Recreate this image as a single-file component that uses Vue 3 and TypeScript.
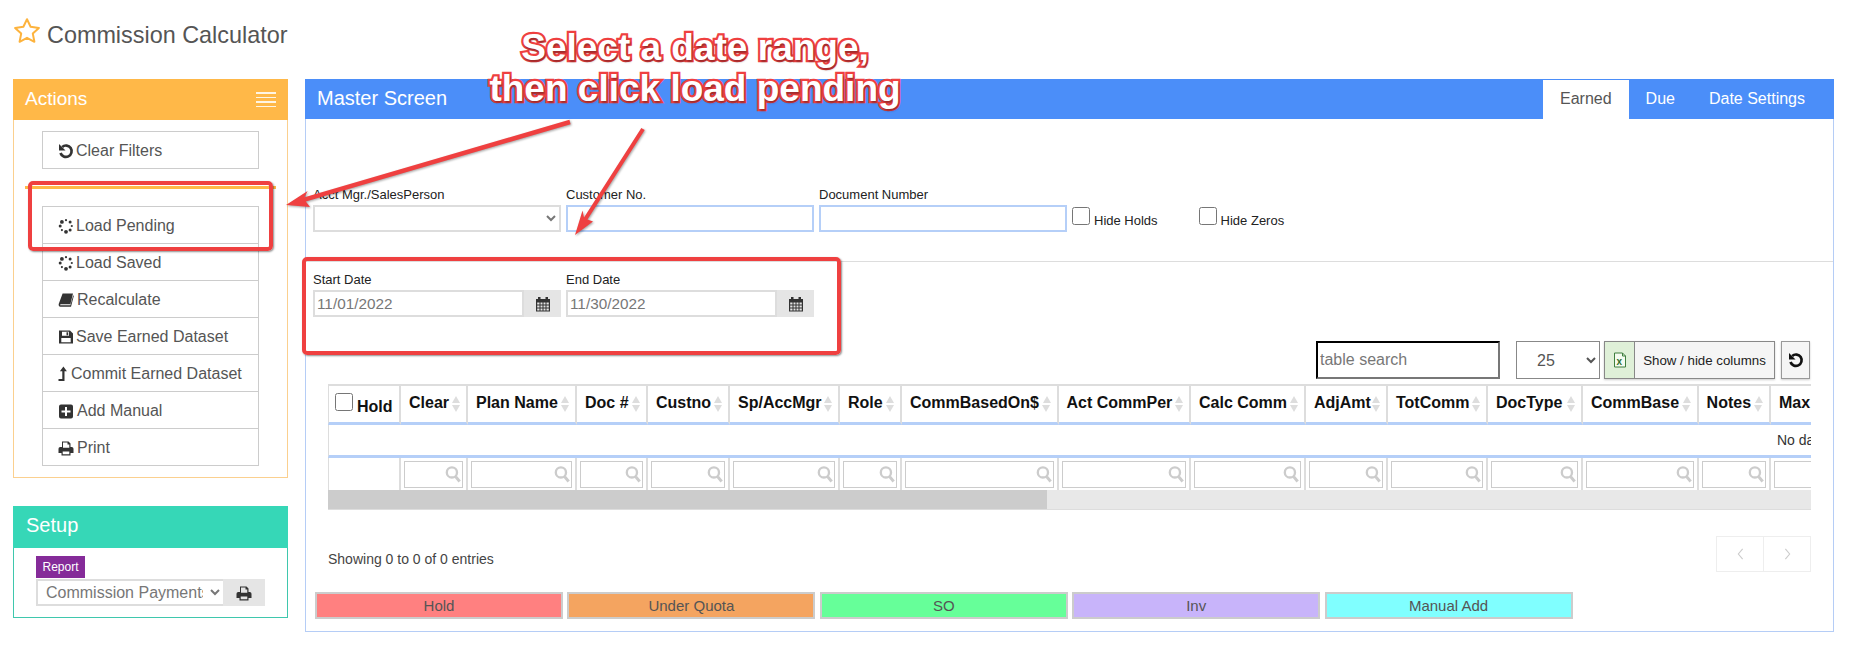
<script setup lang="ts">
interface Action { label: string; icon: string }
const actions: Action[] = [
  { label: 'Load Pending', icon: 'spin' },
  { label: 'Load Saved', icon: 'spin' },
  { label: 'Recalculate', icon: 'book' },
  { label: 'Save Earned Dataset', icon: 'save' },
  { label: 'Commit Earned Dataset', icon: 'up' },
  { label: 'Add Manual', icon: 'plus' },
  { label: 'Print', icon: 'print' },
]
const columns: { t: string; w: number }[] = [
  { t: 'Hold', w: 73 }, { t: 'Clear', w: 67 }, { t: 'Plan Name', w: 109 }, { t: 'Doc #', w: 71 },
  { t: 'Custno', w: 82 }, { t: 'Sp/AccMgr', w: 110 }, { t: 'Role', w: 62 }, { t: 'CommBasedOn$', w: 156.5 },
  { t: 'Act CommPer', w: 132.5 }, { t: 'Calc Comm', w: 115 }, { t: 'AdjAmt', w: 82 }, { t: 'TotComm', w: 100 },
  { t: 'DocType', w: 95 }, { t: 'CommBase', w: 115.6 }, { t: 'Notes', w: 72.4 }, { t: 'Max', w: 80 },
]
const legend = [
  { t: 'Hold', c: '#ff8080' }, { t: 'Under Quota', c: '#f4a460' }, { t: 'SO', c: '#66ff99' },
  { t: 'Inv', c: '#c8b4fa' }, { t: 'Manual Add', c: '#80ffff' },
]
const dots = [0, 1, 2, 3, 4, 5, 6, 7].map((i) => ({
  x: 8 + 5.8 * Math.cos((i * Math.PI) / 4),
  y: 8 + 5.8 * Math.sin((i * Math.PI) / 4),
  r: 1.1 + (i % 3) * 0.4,
}))
</script>

<template>
  <div class="page">
    <header class="head">
      <svg class="star" viewBox="0 0 28 27" aria-hidden="true">
        <path d="M14 2.2l3.6 7.6 8.3 1.1-6.1 5.7 1.6 8.2L14 20.8l-7.4 4 1.6-8.2-6.1-5.7 8.3-1.1z" fill="none" stroke="#fdb33d" stroke-width="2" stroke-linejoin="round" />
      </svg>
      <h1>Commission Calculator</h1>
    </header>

    <div class="layout">
      <aside class="side">
        <section class="panel actions">
          <div class="phead">
            <span class="ptitle">Actions</span>
            <span class="burger"><i></i><i></i><i></i><i></i></span>
          </div>
          <div class="actions-body">
            <button class="btn single">
              <svg class="ico" viewBox="0 0 16 16"><path d="M4.2 3.9A5.7 5.7 0 1 1 2.5 10" fill="none" stroke="currentColor" stroke-width="2.7" /><path d="M1 1v6.500h6.500z" fill="currentColor" /></svg>
              Clear Filters
            </button>
            <div class="rule"></div>
            <div class="stack">
              <button v-for="a in actions" :key="a.label" class="btn">
                <svg v-if="a.icon === 'up'" class="ico up" viewBox="1 0 10 16">
                  <path d="M1.500 15v-2h3.800V5.200H2.900L6.400.6l3.500 4.600H7.500V15z" fill="currentColor" />
                </svg>
                <svg v-else class="ico" :class="a.icon" viewBox="0 0 16 16">
                  <template v-if="a.icon === 'spin'">
                    <circle v-for="(d, i) in dots" :key="i" :cx="d.x" :cy="d.y" :r="d.r" fill="currentColor" />
                  </template>
                  <path v-else-if="a.icon === 'book'" d="M4.6 1.6H15l-2.6 10.6H3.2c-1 0-1.2.7-1 1.1h10.2l2.8-10 .6.8-2.8 10.6H2.4C.9 14.700.3 13.300.8 11.800z" fill="currentColor" />
                  <path v-else-if="a.icon === 'save'" fill-rule="evenodd" d="M1 1.500h11l3 3v10H1zM4 2.700v4h7v-4zM3.300 9v4.300h9.400V9zM8.500 3.200h1.700v3H8.500z" fill="currentColor" />
                  <path v-else-if="a.icon === 'plus'" fill-rule="evenodd" d="M3 1.500h10a2 2 0 0 1 2 2v10a2 2 0 0 1-2 2H3a2 2 0 0 1-2-2v-10a2 2 0 0 1 2-2zM7 4v3.500H3.500v2H7V13h2V9.500h3.500v-2H9V4z" fill="currentColor" />
                  <path v-else fill-rule="evenodd" d="M4 1.500h6.500l2 2V7h1.200A1.800 1.800 0 0 1 15.500 8.800V13h-3v2.500h-9V13h-3V8.800A1.800 1.800 0 0 1 2.300 7H4zM5 2.600V7.800h6.300V4.400H9.500V2.600zM4.700 11.500v2.800h6.600v-2.800z" fill="currentColor" />
                </svg>
                {{ a.label }}
              </button>
            </div>
          </div>
        </section>

        <section class="panel setup">
          <div class="phead"><span class="ptitle setup-t">Setup</span></div>
          <div class="setup-body">
            <span class="tag">Report</span>
            <div class="setup-row">
              <select class="setup-sel"><option>Commission Payments</option></select>
              <span class="addon print-addon">
                <svg class="ico" viewBox="0 0 16 16"><path fill-rule="evenodd" d="M4 1.500h6.500l2 2V7h1.200A1.800 1.800 0 0 1 15.500 8.800V13h-3v2.500h-9V13h-3V8.800A1.800 1.800 0 0 1 2.300 7H4zM5 2.600V7.800h6.300V4.400H9.500V2.600zM4.700 11.500v2.800h6.600v-2.800z" fill="#333" /></svg>
              </span>
            </div>
          </div>
        </section>
      </aside>

      <main class="master">
        <div class="mhead">
          <span class="mtitle">Master Screen</span>
          <nav class="tabs">
            <a class="tab active">Earned</a>
            <a class="tab">Due</a>
            <a class="tab">Date Settings</a>
          </nav>
        </div>

        <div class="filters">
          <label class="field">
            <span>Acct Mgr./SalesPerson</span>
            <select class="ctl"><option></option></select>
          </label>
          <label class="field">
            <span>Customer No.</span>
            <input class="ctl blue" />
          </label>
          <label class="field">
            <span>Document Number</span>
            <input class="ctl blue" />
          </label>
          <label class="chk first"><input type="checkbox" /><span>Hide Holds</span></label>
          <label class="chk"><input type="checkbox" /><span>Hide Zeros</span></label>
        </div>

        <div class="dates">
          <label class="field" v-for="d in [['Start Date', '11/01/2022'], ['End Date', '11/30/2022']]" :key="d[0]">
            <span>{{ d[0] }}</span>
            <span class="date-row">
              <input class="ctl date" :value="d[1]" />
              <span class="addon cal">
                <svg class="ico" viewBox="0 0 16 16"><path fill-rule="evenodd" d="M1 3h2V1h2.500v2h5V1H13v2h2v12.500H1zM2.200 6.500v2h2.300v-2zm3.300 0v2h2v-2zm3 0v2h2v-2zm3 0v2h2.300v-2zM2.200 9.500v2h2.300v-2zm3.300 0v2h2v-2zm3 0v2h2v-2zm3 0v2h2.300v-2zM2.200 12.500v2h2.300v-2zm3.300 0v2h2v-2zm3 0v2h2v-2zm3 0v2h2.300v-2z" fill="#333" /></svg>
              </span>
            </span>
          </label>
        </div>

        <div class="toolbar">
          <input class="tsearch" placeholder="table search" />
          <select class="tlen"><option>25</option></select>
          <div class="tgroup">
            <button class="excel">
              <svg viewBox="0 0 14 16" width="14" height="16"><path d="M1.500 1h8l3 3v11h-11z" fill="#f4fbf0" stroke="#3f7f3f" /><path d="M9.500 1v3h3" fill="none" stroke="#3f7f3f" /><text x="3.400" y="12.500" class="xl">x</text></svg>
            </button>
            <button class="showhide">Show / hide columns</button>
          </div>
          <button class="refresh">
            <svg class="ico" viewBox="0 0 16 16"><path d="M4.200 3.900A5.700 5.700 0 1 1 2.500 10" fill="none" stroke="#111" stroke-width="2.700" /><path d="M1 1v6.500h6.500z" fill="#111" /></svg>
          </button>
        </div>

        <div class="tablewrap">
          <table>
            <colgroup>
              <col v-for="c in columns" :key="c.t" :style="{ width: c.w + 'px' }" />
              <col />
            </colgroup>
            <thead>
              <tr>
                <th v-for="(c, i) in columns" :key="c.t" :class="{ hold: i === 0 }">
                  <input v-if="i === 0" type="checkbox" class="hold-chk" />
                  <span>{{ c.t }}</span>
                  <span v-if="i > 0" class="sort"></span>
                </th>
                <th></th>
              </tr>
            </thead>
            <tbody>
              <tr class="nodata"><td :colspan="columns.length + 1">No data available in table</td></tr>
              <tr class="frow">
                <td v-for="(c, i) in columns" :key="c.t">
                  <span v-if="i > 0" class="fbox">
                    <input />
                    <svg viewBox="0 0 16 16" class="mag"><circle cx="6.500" cy="6.500" r="4.800" fill="none" stroke="#ccc" stroke-width="2.200" /><path d="M10 10.500l3.800 4.500" stroke="#ccc" stroke-width="2.800" /></svg>
                  </span>
                </td>
                <td></td>
              </tr>
            </tbody>
          </table>
        </div>
        <div class="hscroll"><div class="thumb"></div></div>

        <div class="foot">
          <span class="info">Showing 0 to 0 of 0 entries</span>
          <div class="pager">
            <a><svg viewBox="0 0 8 14" width="7" height="12"><path d="M6.500 1L1.500 7l5 6" fill="none" stroke="#ccc" stroke-width="1.300" /></svg></a>
            <a><svg viewBox="0 0 8 14" width="7" height="12"><path d="M1.500 1l5 6-5 6" fill="none" stroke="#ccc" stroke-width="1.300" /></svg></a>
          </div>
        </div>

        <div class="legend">
          <div v-for="l in legend" :key="l.t" class="chip" :style="{ background: l.c }">{{ l.t }}</div>
        </div>
      </main>
    </div>

    <div class="note">Select a date range,<br />then click load pending</div>
    <div class="box box-load"></div>
    <div class="box box-date"></div>
    <svg class="arrows" width="1850" height="655" viewBox="0 0 1850 655" aria-hidden="true">
      <g class="arrow-g">
        <path d="M570.600 124.200L305.800 201.600 310 207 286 205 307.600 191 304.600 197.200 569.400 119.800z" fill="#ef4040" />
        <path d="M644.700 130.100L587.500 219.500 593 221.500 575 235 582.500 210.500 584 217.500 641.300 127.900z" fill="#ef4040" />
      </g>
    </svg>
  </div>
</template>

<style>
html, body { margin: 0; background: #fff; }
</style>

<style scoped>
.page { position: relative; width: 1850px; height: 655px; overflow: hidden; font-family: "Liberation Sans", Arial, sans-serif; color: #555; background: #fff; }
.head { height: 79px; box-sizing: border-box; padding: 17px 0 0 13px; display: flex; align-items: flex-start; gap: 6px; }
.star { width: 28px; height: 27px; flex: none; }
h1 { margin: 4px 0 0; font-size: 23.400px; line-height: 28px; font-weight: 400; color: #555; }
.layout { display: flex; align-items: flex-start; padding-left: 13px; gap: 17px; }
.side { width: 275px; flex: none; }
.panel { box-sizing: border-box; border: 1px solid; }
.actions { border-color: #fbd08f; border-top: 0; }
.phead { height: 41px; margin: 0 -1px; padding: 0 12px; display: flex; align-items: center; justify-content: space-between; color: #fff; font-size: 19px; }
.ptitle { padding-bottom: 2px; }
.actions .phead { background: #ffb848; }
.burger { display: flex; flex-direction: column; gap: 3px; }
.burger i { display: block; width: 20px; height: 1.500px; background: rgba(255, 255, 255, .85); }
.actions-body { padding: 11px 28px 11px; }
.btn { display: flex; align-items: center; gap: 2px; box-sizing: border-box; width: 217px; height: 38px; padding: 1px 15px 0; background: #fff; border: 1px solid #ccc; font: 400 16px "Liberation Sans", Arial, sans-serif; color: #555; text-align: left; white-space: nowrap; }
.ico { width: 16px; height: 16px; flex: none; color: #333; }
.ico.up { width: 10px; margin-right: 1px; }
.ico.book, .ico.plus, .ico.print { margin-right: 1px; }
.rule { height: 3px; margin: 17px -17px 17px -17px; background: #ffb848; }
.stack .btn + .btn { margin-top: -1px; }
.setup { margin-top: 28px; border-color: #3fc7ad; border-top: 0; height: 112px; }
.setup .phead { background: #36d7b7; height: 42px; }
.setup-t { font-size: 20px; margin-left: 1px; padding-bottom: 4px; }
.setup-body { padding: 8px 22px 0; }
.tag { display: block; width: 49px; height: 22px; line-height: 22px; text-align: center; background: #852b99; color: #fff; font-size: 12px; }
.setup-row { display: flex; margin-top: 1px; height: 27px; }
.setup-sel { box-sizing: border-box; width: 187px; height: 27px; padding: 0 4px; background: #fff; border: 2px solid #ddd; border-right: 0; color: #777; font: 400 16px "Liberation Sans", Arial, sans-serif; }
.addon { display: flex; align-items: center; justify-content: center; background: #e5e5e5; }
.print-addon { width: 42px; }
.master { box-sizing: border-box; width: 1529px; height: 553px; border: 1px solid #b5cdf6; border-top: 0; display: flex; flex-direction: column; }
.mhead { height: 40px; margin: 0 -1px; background: #4b8ef9; display: flex; justify-content: space-between; align-items: stretch; }
.mtitle { color: #fff; font-size: 20px; line-height: 38px; padding-left: 12px; }
.tabs { display: flex; padding-right: 12px; padding-top: 1px; font-size: 16px; }
.tab { display: flex; align-items: center; color: #fff; padding: 0 17px 2px; }
.tab.active { background: #fff; color: #555; }
.filters { display: flex; align-items: flex-start; gap: 5px; padding: 67px 0 0 7px; height: 75px; box-sizing: content-box; border-bottom: 1px solid #ddd; }
.field { display: flex; flex-direction: column; width: 248px; font-size: 13px; color: #222; }
.field > span:first-child { height: 19px; line-height: 17px; }
.ctl { box-sizing: border-box; width: 100%; height: 27px; border: 2px solid #ddd; background: #fff; padding: 0 2px; outline: 0; font: 400 15.300px "Liberation Sans", Arial, sans-serif; color: #777; }
.ctl.blue { border-color: #b5cff8; }
.chk { display: flex; align-items: flex-start; gap: 4px; margin-top: 21px; font-size: 13px; color: #222; }
.chk input { width: 18px; height: 18px; margin: 0; }
.chk span { margin-top: 7px; line-height: 14px; }
.chk.first { margin-right: 36px; }
.dates { display: flex; gap: 5px; padding: 9px 0 0 7px; height: 70px; }
.date-row { display: flex; height: 27px; }
.date { flex: 1; width: auto; min-width: 0; }
.cal { width: 37px; }
.toolbar { display: flex; justify-content: flex-end; align-items: stretch; height: 38px; padding-right: 23px; }
.tsearch { box-sizing: border-box; width: 184px; height: 38px; padding: 0 2px; border: 2px inset #767676; border-color: #222 #777 #777 #222; outline: 0; font: 400 16px "Liberation Sans", Arial, sans-serif; color: #555; }
.tsearch::placeholder { color: #777; }
.tlen { box-sizing: border-box; width: 84px; margin-left: 16px; padding-left: 16px; border: 1px solid #888; background: #fff; font: 400 16px "Liberation Sans", Arial, sans-serif; color: #555; }
.tgroup { display: flex; margin-left: 4px; box-shadow: 0 1px 2px rgba(0, 0, 0, .2); }
.excel { width: 30px; padding: 0; background: #dff0d8; border: 1px solid #888; border-right: 0; display: flex; align-items: center; justify-content: center; }
.xl { font: 700 10px "Liberation Sans", Arial, sans-serif; fill: #2d6e2d; }
.showhide { width: 141px; padding: 0; background: #f5f5f5; border: 1px solid #888; font: 400 13.300px "Liberation Sans", Arial, sans-serif; color: #222; }
.refresh { width: 29px; margin-left: 6px; padding: 0; background: #f5f5f5; border: 1px solid #999; display: flex; align-items: center; justify-content: center; box-shadow: 0 1px 2px rgba(0, 0, 0, .2); }
.tablewrap { width: 1483px; margin: 5px 0 0 22px; overflow: hidden; }
table { width: 3054px; table-layout: fixed; border-collapse: separate; border-spacing: 0; }
th { position: relative; box-sizing: border-box; height: 41px; padding: 0 0 2px 8px; text-align: left; white-space: nowrap; font-size: 16px; font-weight: 700; color: #111; border-top: 2px solid #ddd; border-right: 2px solid #ddd; border-bottom: 3px solid #b5cff8; overflow: hidden; }
th:first-child, td:first-child { border-left: 1px solid #ddd; }
th.hold { padding-left: 6px; padding-bottom: 0; }
.hold-chk { width: 18px; height: 18px; margin: 0 4px 0 0; vertical-align: 1px; }
.sort { position: absolute; right: 6px; top: 10px; width: 0; height: 0; border-left: 4.500px solid transparent; border-right: 4.500px solid transparent; border-bottom: 7px solid #ddd; }
.sort::after { content: ""; position: absolute; left: -4.500px; top: 9px; width: 0; height: 0; border-left: 4.500px solid transparent; border-right: 4.500px solid transparent; border-top: 7px solid #ddd; }
.nodata td { box-sizing: border-box; height: 33px; padding: 0; text-align: center; font-size: 14px; color: #333; border-bottom: 3px solid #b5cff8; }
.frow td { box-sizing: border-box; height: 32px; padding: 2px 3px 2px; border-right: 2px solid #ddd; }
.fbox { position: relative; display: block; height: 27px; }
.fbox input { box-sizing: border-box; display: block; width: 100%; height: 27px; border: 1px solid #ccc; padding: 0; outline: 0; background: #fff; }
.mag { position: absolute; right: 1px; top: 4px; width: 17px; height: 18px; }
.hscroll { width: 1483px; height: 20px; margin-left: 22px; background: #e8e8e8; border-bottom: 1px solid #ddd; box-sizing: border-box; }
.thumb { width: 719px; height: 19px; background: #ccc; }
.foot { display: flex; justify-content: space-between; align-items: flex-start; margin: 26px 0 0 22px; width: 1483px; }
.info { margin-top: 13px; font-size: 14px; line-height: 20px; color: #444; }
.pager { display: flex; box-sizing: border-box; width: 95px; height: 36px; border: 1px solid #eee; }
.pager a { flex: 1; display: flex; align-items: center; justify-content: center; }
.pager a + a { border-left: 1px solid #eee; }
.legend { display: flex; gap: 4.400px; margin: 20px 0 0 9px; }
.chip { box-sizing: border-box; width: 248px; height: 27px; line-height: 23px; text-align: center; border: 2px solid #ccc; font-size: 15px; color: #555; }
.note { position: absolute; left: 395px; top: 27px; width: 600px; text-align: center; font-size: 37px; line-height: 41px; font-weight: 700; color: #fff; -webkit-text-stroke: 4.500px #ef4040; paint-order: stroke fill; text-shadow: 1px 2px 2px rgba(0, 0, 0, .35); }
.box { position: absolute; box-sizing: border-box; border: 4px solid #ef4040; border-radius: 5px; box-shadow: 1px 1px 2px rgba(0, 0, 0, .45); }
.box-load { left: 28px; top: 181px; width: 245px; height: 70px; }
.box-date { left: 302px; top: 257px; width: 539px; height: 98px; }
.arrows { position: absolute; left: 0; top: 0; pointer-events: none; }
.arrow-g { filter: drop-shadow(1px 1px 1px rgba(0, 0, 0, .35)); }
</style>
